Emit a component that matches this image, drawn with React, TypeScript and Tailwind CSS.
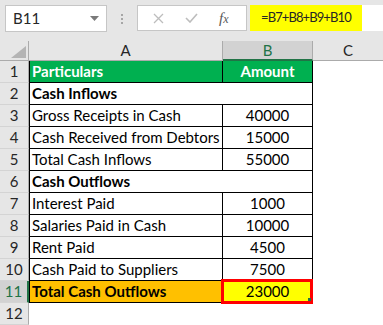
import React from 'react';

const font = { fontFamily: 'Lato, "Open Sans", sans-serif' };

type Row = {
    n: number;
    a: string;
    b?: string;
    kind?: 'head' | 'section' | 'total';
};

const rows: Row[] = [
    { n: 1, a: 'Particulars', b: 'Amount', kind: 'head' },
    { n: 2, a: 'Cash Inflows', kind: 'section' },
    { n: 3, a: 'Gross Receipts in Cash', b: '40000' },
    { n: 4, a: 'Cash Received from Debtors', b: '15000' },
    { n: 5, a: 'Total Cash Inflows', b: '55000' },
    { n: 6, a: 'Cash Outflows', kind: 'section' },
    { n: 7, a: 'Interest Paid', b: '1000' },
    { n: 8, a: 'Salaries Paid in Cash', b: '10000' },
    { n: 9, a: 'Rent Paid', b: '4500' },
    { n: 10, a: 'Cash Paid to Suppliers', b: '7500' },
    { n: 11, a: 'Total Cash Outflows', b: '23000', kind: 'total' },
];

const RowHeader: React.FC<{ n: number; selected?: boolean }> = ({ n, selected }) => (
    <div
        className={`w-[29px] h-[22px] shrink-0 flex items-center justify-center text-[15px] border-b border-[#d4d4d4] ${
            selected
                ? 'bg-[#d2d2d2] text-[#217346] border-r-2 border-r-[#217346]'
                : 'bg-[#e6e6e6] text-[#262626] border-r border-r-[#ababab]'
        }`}
    >
        {n}
    </div>
);

export default function App() {
    return (
        <div className="w-[383px] h-[325px] bg-white overflow-hidden text-black" style={font}>
            {/* Formula bar */}
            <div className="h-[41px] bg-[#e6e6e6] flex items-start pt-[5px]">
                <div className="ml-[5px] w-[102px] h-[27px] bg-white border border-[#c6c6c6] flex items-center justify-between pl-[7px] pr-[7px] text-[15px] text-[#262626]">
                    <span>B11</span>
                    <svg width="9" height="5" viewBox="0 0 9 5">
                        <path d="M0 0 L9 0 L4.5 5 Z" fill="#7a7a7a" />
                    </svg>
                </div>
                <div className="w-[30px] h-[27px] flex flex-col items-center justify-center gap-[2px]">
                    <span className="w-[2px] h-[2px] bg-[#a6a6a6]" />
                    <span className="w-[2px] h-[2px] bg-[#a6a6a6]" />
                    <span className="w-[2px] h-[2px] bg-[#a6a6a6]" />
                </div>
                <div className="w-[110px] h-[26px] bg-white border border-[#c6c6c6] flex items-center">
                    <svg width="11" height="11" viewBox="0 0 11 11" className="ml-[15px]">
                        <path d="M1 1 L10 10 M10 1 L1 10" stroke="#bdbdbd" strokeWidth="1.3" />
                    </svg>
                    <svg width="13" height="10" viewBox="0 0 13 10" className="ml-[21px]">
                        <path d="M1 5 L5 9 L12 1" stroke="#bdbdbd" strokeWidth="1.6" fill="none" />
                    </svg>
                    <span
                        className="ml-[21px] italic text-[15px] text-[#595959]"
                        style={{ fontFamily: '"Liberation Serif", serif' }}
                    >
                        f<span className="text-[12px]">x</span>
                    </span>
                </div>
                <div className="ml-[3px] flex-1 h-[26px] bg-white flex">
                    <div className="w-[112px] h-full bg-[#ffff00] flex items-center pl-[11px] text-[13px] tracking-[-0.9px] whitespace-nowrap text-[#262626]">
                        =B7+B8+B9+B10
                    </div>
                </div>
            </div>

            {/* Column headers */}
            <div className="flex h-[20px] text-[15px]">
                <div className="w-[29px] h-full bg-[#e6e6e6] border-r border-b border-[#ababab] flex items-end justify-end pr-[2px] pb-[2px]">
                    <svg width="15" height="12" viewBox="0 0 15 12">
                        <path d="M15 0 L15 12 L0 12 Z" fill="#b4b4b4" />
                    </svg>
                </div>
                <div className="w-[194px] h-full bg-[#e6e6e6] border-r border-b border-[#ababab] flex items-center justify-center text-[#262626]">
                    A
                </div>
                <div className="w-[90px] h-full bg-[#d2d2d2] border-r border-[#ababab] border-b-2 border-b-[#217346] flex items-center justify-center text-[#217346]">
                    B
                </div>
                <div className="flex-1 h-full bg-[#e6e6e6] border-b border-[#ababab] flex items-center justify-center text-[#262626]">
                    C
                </div>
            </div>

            {/* Rows */}
            {rows.map(r => (
                <div key={r.n} className="flex h-[22px] text-[15px]">
                    <RowHeader n={r.n} selected={r.kind === 'total'} />
                    {r.kind === 'section' ? (
                        <div className="w-[284px] h-full border-l border-r border-b border-black flex items-center pl-[2px] font-bold">
                            {r.a}
                        </div>
                    ) : (
                        <>
                            <div
                                className={`w-[194px] h-full border-l border-r border-b border-black flex items-center pl-[2px] ${
                                    r.kind === 'head'
                                        ? 'bg-[#00b050] text-white font-bold'
                                        : r.kind === 'total'
                                        ? 'bg-[#ffc000] font-bold'
                                        : ''
                                }`}
                            >
                                {r.a}
                            </div>
                            <div
                                className={`relative w-[90px] h-full border-r border-b border-black flex items-center justify-center ${
                                    r.kind === 'head'
                                        ? 'bg-[#00b050] text-white font-bold'
                                        : r.kind === 'total'
                                        ? 'bg-[#ffff00]'
                                        : ''
                                }`}
                            >
                                {r.b}
                                {r.kind === 'total' && (
                                    <>
                                        <div className="absolute -left-[2px] -top-[2px] -right-[1px] -bottom-[2px] border-[3px] border-[#ff0000]" />
                                        <div className="absolute right-[1px] bottom-[1px] w-[3px] h-[3px] bg-[#217346]" />
                                    </>
                                )}
                            </div>
                        </>
                    )}
                </div>
            ))}
            <div className="flex h-[22px] text-[15px]">
                <RowHeader n={12} />
            </div>
        </div>
    );
}
